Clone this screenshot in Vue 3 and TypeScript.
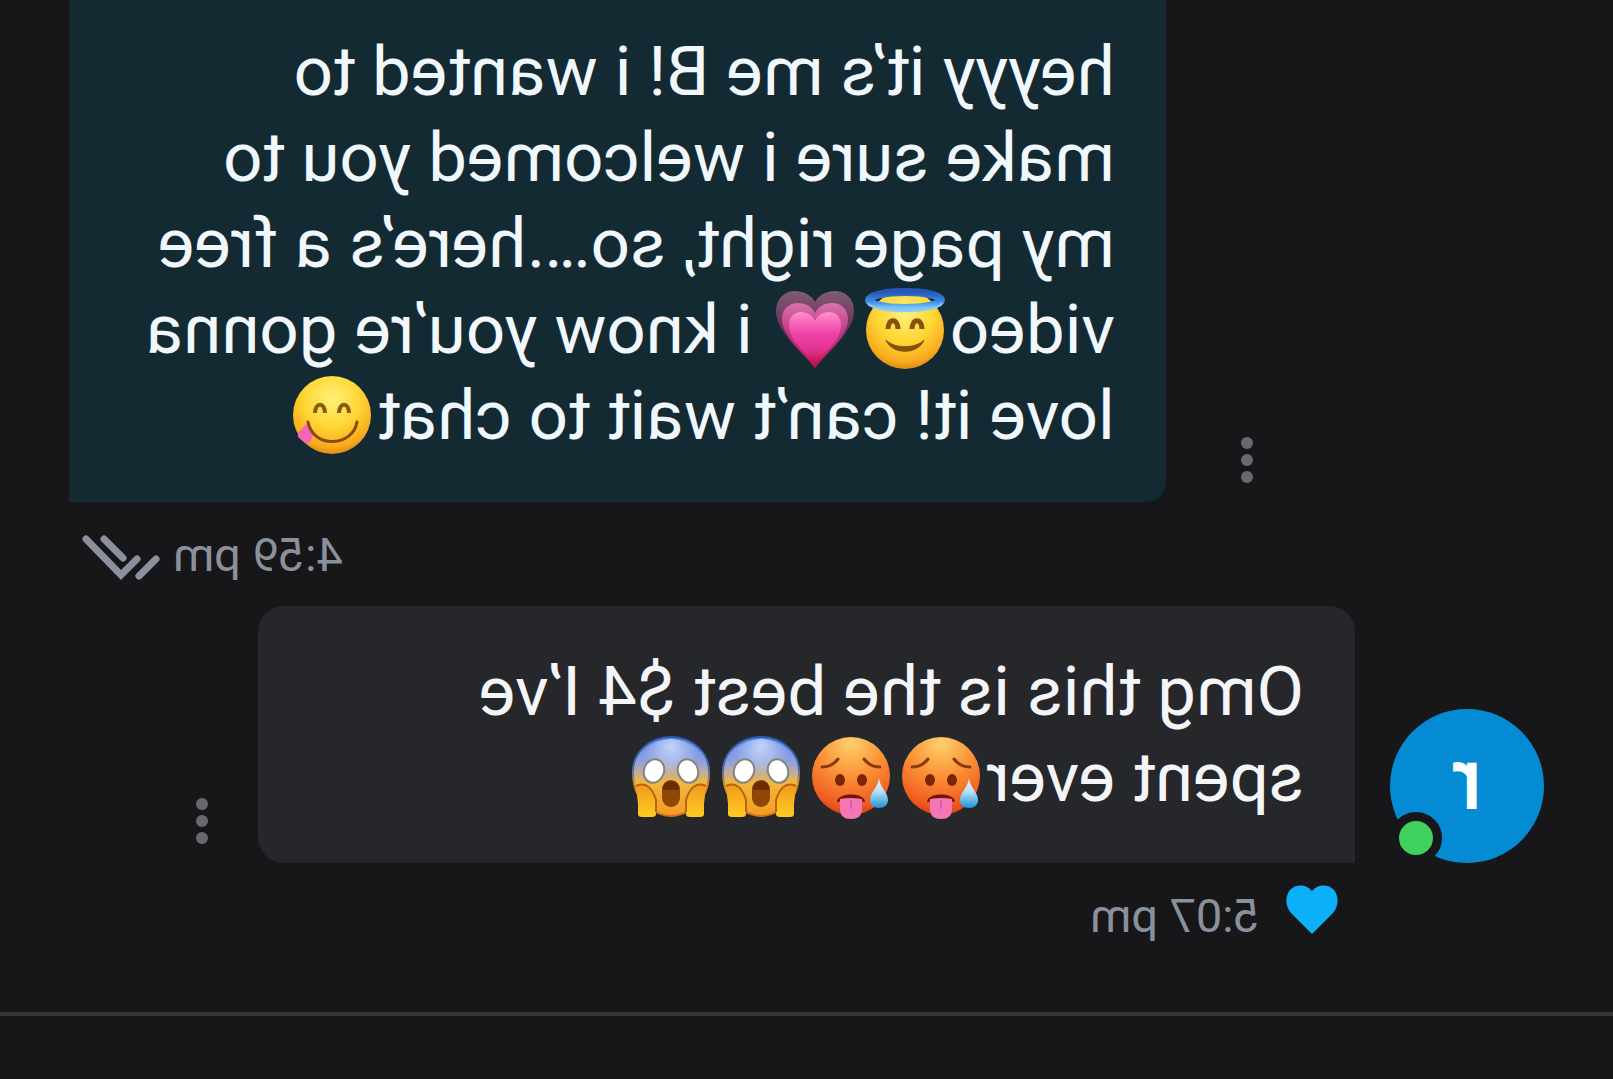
<script setup lang="ts">
type Emoji = 'halo' | 'hearts' | 'yum' | 'hot' | 'scream'

interface Part {
  text?: string
  emoji?: Emoji
}

interface Message {
  id: number
  own: boolean
  time: string
  lines: Part[][]
}

const labels: Record<Emoji, string> = {
  halo: 'smiling face with halo',
  hearts: 'growing heart',
  yum: 'face savoring food',
  hot: 'hot face',
  scream: 'face screaming in fear',
}

const messages: Message[] = [
  {
    id: 1,
    own: true,
    time: '4:59 pm',
    lines: [
      [{ text: 'heyyy it’s me B! i wanted to' }],
      [{ text: 'make sure i welcomed you to' }],
      [{ text: 'my page right, so….here’s a free' }],
      [{ text: 'video' }, { emoji: 'halo' }, { emoji: 'hearts' }, { text: ' i know you’re gonna' }],
      [{ text: 'love it! can’t wait to chat' }, { emoji: 'yum' }],
    ],
  },
  {
    id: 2,
    own: false,
    time: '5:07 pm',
    lines: [
      [{ text: 'Omg this is the best $4 I’ve' }],
      [{ text: 'spent ever' }, { emoji: 'hot' }, { emoji: 'hot' }, { emoji: 'scream' }, { emoji: 'scream' }],
    ],
  },
]
</script>

<template>
  <svg class="sprite" aria-hidden="true">
    <defs>
      <radialGradient id="g-yellow" cx="50%" cy="30%" r="72%">
        <stop offset="0" stop-color="#fff07a" />
        <stop offset="0.5" stop-color="#ffd633" />
        <stop offset="0.85" stop-color="#f8a91d" />
        <stop offset="1" stop-color="#d98512" />
      </radialGradient>
      <radialGradient id="g-hot" cx="50%" cy="8%" r="95%">
        <stop offset="0" stop-color="#ffd06a" />
        <stop offset="0.45" stop-color="#fb9136" />
        <stop offset="0.85" stop-color="#ee5a20" />
        <stop offset="1" stop-color="#cf3d12" />
      </radialGradient>
      <linearGradient id="g-scream" x1="0" y1="0" x2="0" y2="1">
        <stop offset="0" stop-color="#5f88e6" />
        <stop offset="0.3" stop-color="#8fa0e0" />
        <stop offset="0.45" stop-color="#c3ad9a" />
        <stop offset="0.58" stop-color="#f0b840" />
        <stop offset="1" stop-color="#f59a22" />
      </linearGradient>
      <radialGradient id="g-shine" cx="50%" cy="10%" r="40%">
        <stop offset="0" stop-color="#e8f0ff" stop-opacity="0.7" />
        <stop offset="1" stop-color="#e8f0ff" stop-opacity="0" />
      </radialGradient>
      <linearGradient id="g-rim" x1="0" y1="0" x2="0" y2="1">
        <stop offset="0" stop-color="#2c5cb4" />
        <stop offset="0.4" stop-color="#4a70bd" />
        <stop offset="0.6" stop-color="#d98a24" />
        <stop offset="1" stop-color="#c9741a" />
      </linearGradient>
      <linearGradient id="g-hand" x1="0" y1="0" x2="0" y2="1">
        <stop offset="0" stop-color="#ef9a1c" />
        <stop offset="1" stop-color="#ffcb22" />
      </linearGradient>
      <linearGradient id="g-drop" x1="0" y1="0" x2="0" y2="1">
        <stop offset="0" stop-color="#f4fbff" />
        <stop offset="0.45" stop-color="#b5e0f6" />
        <stop offset="1" stop-color="#1f93de" />
      </linearGradient>
      <linearGradient id="g-halo" x1="0" y1="0" x2="0" y2="1">
        <stop offset="0" stop-color="#2358b8" />
        <stop offset="0.6" stop-color="#3f8be6" />
        <stop offset="1" stop-color="#7cc8f6" />
      </linearGradient>
      <linearGradient id="g-heart" x1="0" y1="0" x2="0" y2="1">
        <stop offset="0" stop-color="#ff8fcd" />
        <stop offset="0.4" stop-color="#f044a6" />
        <stop offset="0.7" stop-color="#e23494" />
        <stop offset="1" stop-color="#c01048" />
      </linearGradient>
      <linearGradient id="g-heart-mid" x1="0" y1="0" x2="0" y2="1">
        <stop offset="0" stop-color="#d873ae" />
        <stop offset="0.5" stop-color="#b83580" />
        <stop offset="1" stop-color="#c01450" />
      </linearGradient>
      <linearGradient id="g-heart-far" x1="0" y1="0" x2="0" y2="1">
        <stop offset="0" stop-color="#7d5c76" />
        <stop offset="0.5" stop-color="#6f2c56" />
        <stop offset="1" stop-color="#8a1440" />
      </linearGradient>
    </defs>

    <symbol id="e-halo" viewBox="0 0 90 80" overflow="visible">
      <circle cx="45" cy="40" r="39" fill="url(#g-yellow)" />
      <ellipse cx="45" cy="10" rx="36" ry="8" fill="none" stroke="url(#g-halo)" stroke-width="8" />
      <path d="M8 13C14 24 76 24 82 13" fill="none" stroke="#8fd2f8" stroke-width="2" opacity="0.7" />
      <path d="M28 39C28 28 38 28 38 39M52 39C52 28 62 28 62 39" fill="none" stroke="#8a5208" stroke-width="5" />
      <path d="M26 50C34 59 56 59 64 50C58 65 32 65 26 50Z" fill="#85500a" stroke="#85500a" stroke-width="1" stroke-linejoin="round" />
    </symbol>

    <symbol id="e-hearts" viewBox="0 0 90 80" overflow="visible">
      <path d="M45 78C36 64 6 44 6 21C6 8 15 1 25 1C35 1 42 6 45 12C48 6 55 1 65 1C75 1 84 8 84 21C84 44 54 64 45 78Z" fill="url(#g-heart-far)" />
      <path d="M45 78C37 66 12 48 12 29C12 19 19 13 28 13C36 13 42 17 45 23C48 17 54 13 62 13C71 13 78 19 78 29C78 48 53 66 45 78Z" fill="url(#g-heart-mid)" />
      <path d="M45 75C38 64 19 52 19 35C19 26 25 22 31 22C38 22 43 26 45 31C47 26 52 22 59 22C65 22 71 26 71 35C71 52 52 64 45 75Z" fill="url(#g-heart)" />
    </symbol>

    <symbol id="e-yum" viewBox="0 0 90 80" overflow="visible">
      <circle cx="45" cy="39" r="39" fill="url(#g-yellow)" />
      <path d="M28 37C28 26 38 26 38 37M52 37C52 26 62 26 62 37" fill="none" stroke="#8a5a0a" stroke-width="4" />
      <path d="M62 56L71 48L79 57Q80 60 78 62L72 67Q69 68 67 66Z" fill="#f567b5" />
      <path d="M20 46C24 71 64 73 69 46" fill="none" stroke="#8a4a0a" stroke-width="3" stroke-linecap="round" />
    </symbol>

    <symbol id="e-hot" viewBox="0 0 90 80" overflow="visible">
      <circle cx="45" cy="38" r="39" fill="url(#g-hot)" />
      <path d="M16 29Q26 29 32 21M58 21Q64 29 74 29" fill="none" stroke="#8a3a0c" stroke-width="3" stroke-linecap="round" />
      <ellipse cx="34" cy="42" rx="5" ry="6" fill="#7c2408" />
      <ellipse cx="56" cy="42" rx="5" ry="6" fill="#7c2408" />
      <path d="M31 64C31 54 59 54 59 64Q45 60 31 64Z" fill="#701408" />
      <path d="M34 61Q45 59 56 61V71Q56 81 45 81Q34 81 34 71Z" fill="#f576b6" />
      <path d="M45 62V71" stroke="#e25aa2" stroke-width="2" />
      <path d="M17 40C18 50 26 54 26 62C26 67 22 70 17 70C12 70 8 67 8 62C8 54 16 50 17 40Z" fill="url(#g-drop)" />
    </symbol>

    <symbol id="e-scream" viewBox="0 0 90 80" overflow="visible">
      <path d="M45 -1C67 -1 83 15 83 34C83 54 74 66 66 71C58 76 52 78 45 78C38 78 32 76 24 71C16 66 7 54 7 34C7 15 23 -1 45 -1Z" fill="url(#g-scream)" stroke="url(#g-rim)" stroke-width="2" />
      <circle cx="45" cy="37" r="36" fill="url(#g-shine)" />
      <ellipse cx="28" cy="33" rx="10" ry="12" fill="#fff" stroke="#86837c" stroke-width="2" transform="rotate(20 28 33)" />
      <ellipse cx="62" cy="33" rx="10" ry="12" fill="#fff" stroke="#86837c" stroke-width="2" transform="rotate(-20 62 33)" />
      <rect x="36" y="42" width="18" height="27" rx="9" fill="#8f4705" />
      <path d="M37 52Q37 43 45 43Q53 43 53 52Z" fill="#6f2c04" />
      <path d="M10 48Q22 42 29 58L30 76Q30 79 26 79H16Q12 79 12 76V66Z" fill="url(#g-hand)" />
      <path d="M10 48Q24 42 30 62V74" fill="none" stroke="#b9650f" stroke-width="2" />
      <path d="M80 48Q68 42 61 58L60 76Q60 79 64 79H74Q78 79 78 76V66Z" fill="url(#g-hand)" />
      <path d="M80 48Q66 42 60 62V74" fill="none" stroke="#b9650f" stroke-width="2" />
    </symbol>
  </svg>

  <main class="chat">
    <section class="thread">
      <article v-for="m in messages" :key="m.id" class="message" :class="m.own ? 'own' : 'other'">
        <div class="row">
          <div v-if="!m.own" class="avatar">
            <span class="initial">r</span>
            <span class="status"></span>
          </div>
          <div class="bubble">
            <p v-for="(line, i) in m.lines" :key="i" class="line">
              <template v-for="(part, j) in line" :key="j">
                <svg v-if="part.emoji" class="emoji" role="img" :aria-label="labels[part.emoji]">
                  <use :href="'#e-' + part.emoji" width="90" height="80" />
                </svg>
                <span v-else>{{ part.text }}</span>
              </template>
            </p>
          </div>
          <button class="more" type="button" aria-label="Message options">
            <i></i><i></i><i></i>
          </button>
        </div>
        <div class="meta">
          <svg v-if="!m.own" class="like" viewBox="0 0 52 50" aria-hidden="true">
            <path d="M26 49L5 28C-1 21-1 11 4 5C10-1 20-1 26 6C32-1 42-1 48 5C53 11 53 21 47 28Z" fill="#0bb0f8" />
          </svg>
          <time>{{ m.time }}</time>
          <svg v-if="m.own" class="ticks" viewBox="0 0 78 46" aria-hidden="true">
            <path d="M74 5L39 41L23 25M56 5L37 24M21 42L4 25" fill="none" stroke="#8b919c" stroke-width="7" stroke-linecap="round" />
          </svg>
        </div>
      </article>
    </section>
    <footer class="composer"></footer>
  </main>
</template>

<style>
body {
  margin: 0;
  background: #171719;
}
</style>

<style scoped>
.sprite {
  position: absolute;
  width: 0;
  height: 0;
}

/* The whole conversation is shown as a mirror image. */
.chat {
  display: flex;
  flex-direction: column;
  min-height: 100vh;
  overflow: hidden;
  background: #171719;
  font-family: Roboto, "Liberation Sans", sans-serif;
  transform: scaleX(-1);
}

.thread {
  padding-bottom: 45px;
}

.row {
  display: flex;
  align-items: flex-end;
  padding: 0 69px;
}

.own .row {
  flex-direction: row-reverse;
}

.bubble {
  box-sizing: border-box;
  flex: none;
  width: 68vw;
  padding: 43px 51px 42px;
  border-radius: 26px 26px 26px 0;
  background: #26272a;
  color: #f4f5f9;
}

.own .bubble {
  padding: 29px 51px 43px;
  border-radius: 0 0 0 20px;
  background: #142a32;
  color: #f0f7fd;
}

.line {
  margin: 0;
  font-size: 69px;
  line-height: 86px;
  white-space: pre;
}

.emoji {
  display: inline-block;
  width: 90px;
  height: 80px;
  overflow: visible;
  vertical-align: -17px;
}

.avatar {
  position: relative;
  display: flex;
  flex: none;
  align-items: center;
  justify-content: center;
  box-sizing: border-box;
  width: 154px;
  height: 154px;
  margin-right: 35px;
  padding-bottom: 12px;
  border-radius: 50%;
  background: #058ad4;
  color: #fff;
}

.initial {
  font-size: 84px;
  line-height: 96px;
  -webkit-text-stroke: 2px #fff;
}

.status {
  position: absolute;
  right: 0;
  bottom: -1px;
  width: 34px;
  height: 34px;
  border: 9px solid #171719;
  border-radius: 50%;
  background: #3fd060;
}

.more {
  display: flex;
  flex: none;
  flex-direction: column;
  align-items: center;
  gap: 5px;
  width: 48px;
  margin: 0 0 19px 32px;
  padding: 0;
  border: 0;
  background: none;
}

.own .more {
  margin: 0 57px 19px 0;
}

.more i {
  width: 12px;
  height: 12px;
  border-radius: 50%;
  background: #68686e;
}

.meta {
  display: flex;
  align-items: flex-start;
  gap: 26px;
  padding: 26px 82px 24px 275px;
  color: #8b919c;
  font-size: 47px;
  line-height: 54px;
}

.own .meta {
  justify-content: flex-end;
  gap: 13px;
}

.like {
  width: 52px;
  height: 50px;
  margin-top: -4px;
}

.ticks {
  width: 78px;
  height: 46px;
  margin-top: 6px;
}

.composer {
  flex: 1;
  border-top: 4px solid #363638;
}
</style>
